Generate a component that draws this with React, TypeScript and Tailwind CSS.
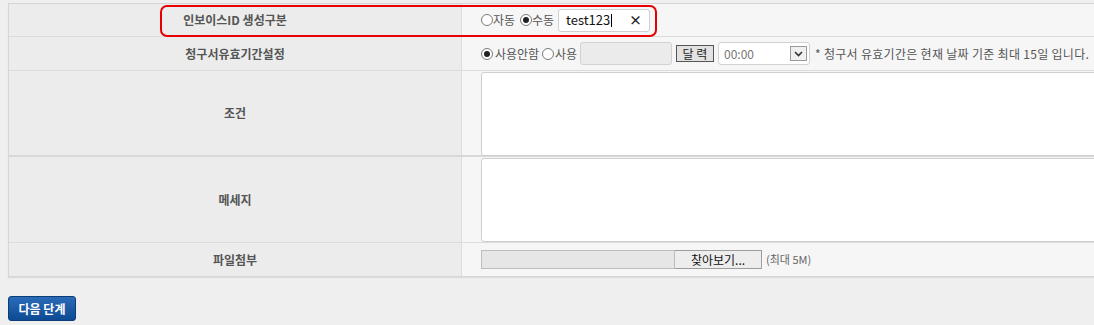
const font = { fontFamily: '"Noto Sans CJK KR", "Noto Sans", sans-serif' };

function Radio({ checked }: { checked?: boolean }) {
  return (
    <span className="inline-flex h-[12px] w-[12px] shrink-0 items-center justify-center rounded-full border border-[#7a7a7a] bg-white">
      {checked && <span className="h-[6px] w-[6px] rounded-full bg-[#222]" />}
    </span>
  );
}

function Label({ children }: { children: React.ReactNode }) {
  return (
    <div className="flex w-[453px] shrink-0 items-center justify-center border-r border-[#dcdcdc] bg-[#ececec] text-[12px] font-bold text-[#555]">
      {children}
    </div>
  );
}

export default function App() {
  return (
    <div className="relative h-[325px] w-[1094px] overflow-hidden bg-[#efefef]" style={font}>
      <div className="pl-[8px] pt-[3px]">
        <div className="w-[1120px] border-l border-t border-b border-[#d6d6d6] shadow-[0_1px_1px_rgba(0,0,0,0.08)]">
          {/* 인보이스ID 생성구분 */}
          <div className="flex h-[33px] border-b border-[#dcdcdc]">
            <Label>인보이스ID 생성구분</Label>
            <div className="flex flex-1 items-center whitespace-nowrap bg-[#f6f6f6] pl-[19px] text-[12px] text-[#555]">
              <Radio />
              <span className="w-[22px] shrink-0 text-center">자동</span>
              <span className="ml-[5px]" />
              <Radio checked />
              <span className="w-[22px] shrink-0 text-center">수동</span>
              <div className="ml-[4px] flex h-[23px] w-[92px] items-center justify-between rounded-[3px] border border-[#cfcfcf] bg-white pl-[7px] pr-[7px]">
                <span className="text-[13px] text-[#111]">
                  test123<span className="ml-[1px] inline-block h-[13px] w-px translate-y-[2px] bg-black" />
                </span>
                <span className="text-[13px] font-bold text-[#222]">×</span>
              </div>
            </div>
          </div>

          {/* 청구서유효기간설정 */}
          <div className="flex h-[34px] border-b border-[#dcdcdc]">
            <Label>청구서유효기간설정</Label>
            <div className="flex flex-1 items-center whitespace-nowrap bg-[#f6f6f6] pl-[19px] text-[12px] text-[#555]">
              <Radio checked />
              <span className="w-[48px] shrink-0 text-center">사용안함</span>
              <span className="ml-[1px]" />
              <Radio />
              <span className="w-[24px] shrink-0 text-center">사용</span>
              <div className="ml-[2px] h-[23px] w-[92px] rounded-[3px] border border-[#d2d2d2] bg-[#ebebeb]" />
              <button className="ml-[4px] h-[17px] w-[38px] border border-[#555] bg-[#e2e2e2] text-[12px] leading-none text-[#222]">
                달 력
              </button>
              <div className="ml-[4px] flex h-[23px] w-[92px] items-center justify-between rounded-[3px] border border-[#d2d2d2] bg-white pl-[5px] pr-[2px]">
                <span className="text-[12px] text-[#777]">00:00</span>
                <span className="flex h-[15px] w-[17px] items-center justify-center border border-[#9a9a9a] bg-[#f0f0f0]">
                  <svg width="9" height="6" viewBox="0 0 9 6">
                    <path d="M1 1 L4.5 4.5 L8 1" fill="none" stroke="#333" strokeWidth="1.6" />
                  </svg>
                </span>
              </div>
              <span className="ml-[5px] text-[12px] tracking-[0.3px] text-[#555]">
                * 청구서 유효기간은 현재 날짜 기준 최대 15일 입니다.
              </span>
            </div>
          </div>

          {/* 조건 */}
          <div className="flex h-[86px] border-b-2 border-[#d8d8d8]">
            <Label>조건</Label>
            <div className="flex-1 bg-[#f6f6f6] pl-[19px] pt-[1px]">
              <div className="h-[84px] w-full rounded-[3px] border border-[#cfcfcf] bg-white" />
            </div>
          </div>

          {/* 메세지 */}
          <div className="flex h-[86px] border-b border-[#dcdcdc]">
            <Label>메세지</Label>
            <div className="flex-1 bg-[#f6f6f6] pl-[19px] pt-[1px]">
              <div className="h-[84px] w-full rounded-[3px] border border-[#cfcfcf] bg-white" />
            </div>
          </div>

          {/* 파일첨부 */}
          <div className="flex h-[33px]">
            <Label>파일첨부</Label>
            <div className="flex flex-1 items-center bg-[#f6f6f6] pl-[19px] text-[12px]">
              <div className="h-[19px] w-[194px] border border-[#bdbdbd] bg-[#e6e6e6]" />
              <button className="h-[19px] w-[87px] border border-l-0 border-[#9d9d9d] bg-[#ededed] text-[12px] leading-none text-[#111]">
                찾아보기...
              </button>
              <span className="ml-[4px] text-[11px] text-[#666]">(최대 5M)</span>
            </div>
          </div>
        </div>

        <button className="mt-[19px] flex h-[25px] w-[68px] items-center justify-center rounded-[3px] border border-[#0a3c78] bg-gradient-to-b from-[#2a6bb8] to-[#0d4a94] text-[12px] font-bold text-white">
          다음 단계
        </button>
      </div>

      {/* 강조 표시 */}
      <div className="pointer-events-none absolute left-[160px] top-[5px] h-[32px] w-[497px] rounded-[7px] border-2 border-[#e60000]" />
    </div>
  );
}
